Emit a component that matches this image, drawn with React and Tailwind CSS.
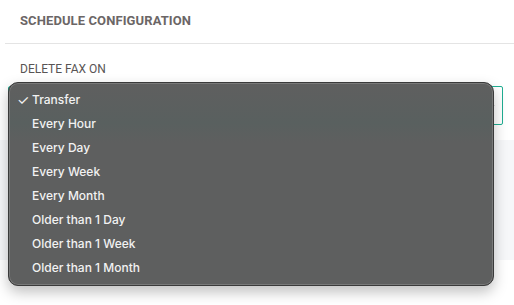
const options = [
  "Transfer",
  "Every Hour",
  "Every Day",
  "Every Week",
  "Every Month",
  "Older than 1 Day",
  "Older than 1 Week",
  "Older than 1 Month",
];

export default function App() {
  return (
    <div className="relative w-[514px] h-[305px] overflow-hidden bg-white font-['Roboto',sans-serif]">
      <div className="pl-5 pt-[11px] h-[43px] text-[13px] font-bold text-[#6b6666] tracking-[0.1px]">
        SCHEDULE CONFIGURATION
      </div>
      <div className="ml-[5px] h-px bg-[#e4e4e4]" />
      <div className="pl-5 pt-[16px] text-[12px] text-[#585454]">DELETE FAX ON</div>

      <div className="mt-[8px] ml-[8px] mr-[11px] h-[39px] border border-[#1fae92] rounded-[2px] flex items-center justify-end pr-[6px]">
        <svg width="10" height="10" viewBox="0 0 10 10" className="text-[#777]">
          <path d="M2 4l3 3 3-3" fill="none" stroke="currentColor" strokeWidth="1.4" />
        </svg>
      </div>

      <div className="mt-[15px] h-[120px] bg-[#f6f7f9]" />

      <div className="absolute left-[8px] top-[82px] w-[486px] h-[204px] rounded-[10px] border border-[#3a3a3a] bg-[#5e5f5f] bg-[linear-gradient(180deg,#5f5f5f_0px,#59605f_40px,#5e5f5f_60px,#5e5f5f_100%)] shadow-[0_6px_14px_rgba(0,0,0,0.25)] ring-1 ring-inset ring-[#8a8a8a]/60 pt-[5px] font-['Inter',sans-serif]">
        {options.map((o, i) => (
          <div key={o} className="h-[24px] flex items-center text-[12px] font-medium text-[#f2f2f2]">
            <span className="w-[23px] pl-[8px] text-[14px] leading-none font-normal">{i === 0 ? "✓" : ""}</span>
            <span>{o}</span>
          </div>
        ))}
      </div>
    </div>
  );
}
